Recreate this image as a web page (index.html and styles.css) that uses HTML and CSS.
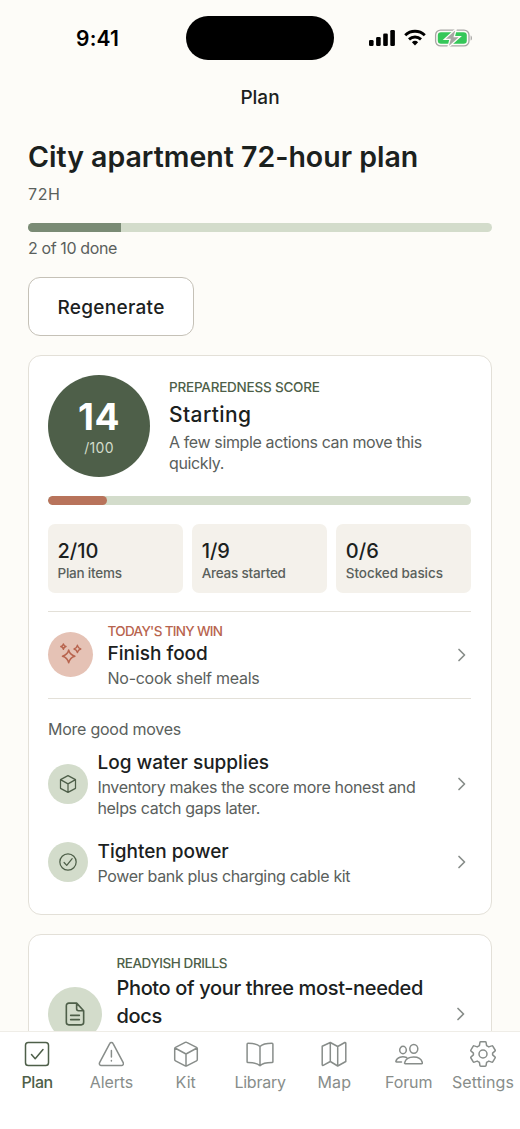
FILE: index.html
```html
<!DOCTYPE html>
<html lang="en">
<head>
<meta charset="utf-8">
<title>Plan</title>
<meta name="viewport" content="width=device-width, initial-scale=1">
<link rel="stylesheet" href="styles.css">
</head>
<body>
<div class="screen">
  <div class="status-bar">
    <div class="clock">9:41</div>
    <div class="island"></div>
    <svg class="status-icons" viewBox="0 0 104 18">
      <rect x="0" y="11" width="4.6" height="6" rx="1.3"/>
      <rect x="7.1" y="8" width="4.6" height="9" rx="1.3"/>
      <rect x="14.2" y="4.4" width="4.6" height="12.6" rx="1.3"/>
      <rect x="21.3" y="1" width="4.6" height="16" rx="1.3"/>
      <g class="wifi">
        <path d="M36.2 6.2a14.3 14.3 0 0 1 19.6 0"/>
        <path d="M40 10.4a8.7 8.7 0 0 1 12 0"/>
      </g>
      <path d="M42.9 13.2a4.7 4.7 0 0 1 6.2 0L46 16.6z"/>
      <rect class="battery-shell" x="66.6" y="1.1" width="33.4" height="15.8" rx="5"/>
      <path class="battery-cap" d="M101.6 6.4c1.8.5 1.8 4.7 0 5.2z"/>
      <rect class="battery-fill" x="68.8" y="3.2" width="29" height="11.6" rx="3.2"/>
      <path class="battery-bolt" d="M87.400-.6 75.400 10.300h5.600l-2.200 8.500 12.400-11.100h-5.900z"/>
    </svg>
  </div>
  <div class="nav-title">Plan</div>

  <main class="content">
    <h1 class="title">City apartment 72-hour plan</h1>
    <div class="duration">72H</div>
    <div class="progress plan-progress"><div class="progress-fill plan-fill" style="width:20%"></div></div>
    <div class="progress-note">2 of 10 done</div>
    <button class="regenerate">Regenerate</button>

    <section class="card">
      <div class="score">
        <div class="score-circle"><span class="score-value">14</span><span class="score-max">/100</span></div>
        <div class="score-text">
          <div class="eyebrow eyebrow-score">PREPAREDNESS SCORE</div>
          <div class="score-level">Starting</div>
          <div class="body-text body-score">A few simple actions can move this<br>quickly.</div>
        </div>
      </div>
      <div class="progress score-progress"><div class="progress-fill score-fill" style="width:14%"></div></div>
      <div class="stats">
        <div class="stat"><div class="stat-value">2/10</div><div class="stat-label">Plan items</div></div>
        <div class="stat"><div class="stat-value">1/9</div><div class="stat-label">Areas started</div></div>
        <div class="stat"><div class="stat-value">0/6</div><div class="stat-label stat-label-wide">Stocked basics</div></div>
      </div>
      <div class="win">
        <div class="badge badge-win">
          <svg class="icon" width="23" height="23" viewBox="0 0 24 24"><path d="M10.1 7.3c.9 3.7 2.6 5.4 6.5 6.5-3.9 1.1-5.6 2.8-6.5 6.9-.9-4.1-2.6-5.8-6.5-6.9 3.9-1.1 5.6-2.8 6.5-6.5zM19.2 2.4c.5 2.3 1.4 3.2 3.5 3.8-2.1.6-3 1.5-3.5 3.8-.5-2.3-1.4-3.2-3.5-3.8 2.1-.6 3-1.5 3.5-3.8zM4.6.9c.4 1.7 1 2.4 2.7 2.8-1.7.4-2.3 1.1-2.7 2.8-.4-1.7-1-2.4-2.7-2.8 1.7-.4 2.3-1.1 2.7-2.8z"/></svg>
        </div>
        <div class="row-text">
          <div class="eyebrow eyebrow-win">TODAY'S TINY WIN</div>
          <div class="row-title">Finish food</div>
          <div class="body-text">No-cook shelf meals</div>
        </div>
        <svg class="chevron" viewBox="0 0 10 14"><path d="M2 1.5 7.5 7 2 12.5"/></svg>
      </div>
      <div class="more-heading">More good moves</div>
      <div class="move">
        <div class="badge badge-move">
          <svg class="icon" width="20" height="20" viewBox="0 0 24 24"><path d="M12 2 21 6.8v10.4L12 22l-9-4.8V6.8zM3 6.8l9 5 9-5M12 11.8V22"/></svg>
        </div>
        <div class="row-text">
          <div class="row-title">Log water supplies</div>
          <div class="body-text">Inventory makes the score more honest and<br>helps catch gaps later.</div>
        </div>
        <svg class="chevron" viewBox="0 0 10 14"><path d="M2 1.5 7.5 7 2 12.5"/></svg>
      </div>
      <div class="move">
        <div class="badge badge-move">
          <svg class="icon" width="20" height="20" viewBox="0 0 24 24"><circle cx="12" cy="12" r="9.8"/><path d="m7.3 12.6 3.2 3.4L17 8"/></svg>
        </div>
        <div class="row-text">
          <div class="row-title">Tighten power</div>
          <div class="body-text">Power bank plus charging cable kit</div>
        </div>
        <svg class="chevron" viewBox="0 0 10 14"><path d="M2 1.5 7.5 7 2 12.5"/></svg>
      </div>
    </section>

    <section class="card drills">
      <div class="badge badge-drill">
        <svg class="icon" width="26" height="26" viewBox="0 0 24 24"><path d="M13.5 2H6.300A2.300 2.300 0 0 0 4 4.300v15.400A2.300 2.300 0 0 0 6.300 22h11.400a2.300 2.300 0 0 0 2.300-2.300V9zM13.500 2v5.200A1.800 1.800 0 0 0 15.300 9H20M8 13.300h8M8 17.200h8"/></svg>
      </div>
      <div class="row-text">
        <div class="eyebrow eyebrow-drill">READYISH DRILLS</div>
        <div class="drill-title">Photo of your three most-needed<br>docs</div>
      </div>
      <svg class="chevron" viewBox="0 0 10 14"><path d="M2 1.5 7.5 7 2 12.5"/></svg>
    </section>
  </main>

  <nav class="tabs">
    <div class="tab tab-active">
      <svg class="tab-icon" viewBox="0 0 26 26"><rect x="1.5" y="1.5" width="23" height="23" rx="2.8"/><path d="m7.5 13.5 3.700 4.300L19 8.500"/></svg>
      <span>Plan</span>
    </div>
    <div class="tab">
      <svg class="tab-icon" viewBox="0 0 26 26"><path d="M11.700 2.600 1.600 21.700a1.900 1.900 0 0 0 1.700 2.800h20.200a1.900 1.900 0 0 0 1.700-2.800L15.100 2.600a1.900 1.900 0 0 0-3.400 0zM13.400 9.500v6.600M13.400 19.500v.5"/></svg>
      <span>Alerts</span>
    </div>
    <div class="tab">
      <svg class="tab-icon" viewBox="0 0 26 26"><path d="M12.200 1.400 2.500 6.300a1.500 1.500 0 0 0-.8 1.300v11a1.500 1.500 0 0 0 .8 1.300l9.700 5a1.600 1.600 0 0 0 1.500 0l9.800-5a1.500 1.500 0 0 0 .8-1.300v-11a1.500 1.500 0 0 0-.8-1.300l-9.800-4.900a1.600 1.600 0 0 0-1.500 0zM2 7l11 6 11-6M13 13v12"/></svg>
      <span class="tab-label-wide">Kit</span>
    </div>
    <div class="tab">
      <svg class="tab-icon tab-icon-book" viewBox="0 0 28 26"><path d="M14 5.500C11.500 3 7 2.300 2 2.300c-.5 0-.9.4-.9.9v17.500c0 .5.4.9.9.9 5 0 9.500.5 12 3.200 2.500-2.700 7-3.200 12-3.200.5 0 .9-.4.9-.9V3.200c0-.5-.4-.9-.9-.9-5 0-9.500.7-12 3.200zM14 5.500v19.300"/></svg>
      <span class="tab-label-tight">Library</span>
    </div>
    <div class="tab">
      <svg class="tab-icon" viewBox="0 0 26 26"><path d="M9.300 1.500 1.200 5.300v18.500a.7.7 0 0 0 1 .6L9.300 20.500l7.400 4.500 8.100-4.500V2.100a.7.7 0 0 0-1-.6l-7.100 4zM9.300 1.500v19M16.700 5.500V25"/></svg>
      <span class="tab-label-wide">Map</span>
    </div>
    <div class="tab">
      <svg class="tab-icon tab-icon-people" viewBox="0 0 28 26"><ellipse cx="18.800" cy="7.800" rx="4" ry="4.400"/><ellipse cx="8" cy="9" rx="3.300" ry="3.700"/><path d="M10.300 22.700h16.400c.6 0 .9-.4.7-1-1-3.700-4.600-5.600-8.700-5.600s-8 1.900-9.100 5.600c-.2.6.1 1 .7 1zM11.500 16.500C7 15 2 16.300.9 20.300c-.1.500.2.8.6.8H6.500"/></svg>
      <span>Forum</span>
    </div>
    <div class="tab">
      <svg class="tab-icon" viewBox="0 0 26 26"><circle cx="13" cy="13" r="4"/><path d="M10.800.8h4.400q.8 0 .9.8l.5 3 2.200 1.300 2.900-1q.8-.3 1.200.4l2.200 3.700q.4.7-.2 1.200l-2.300 1.900v1.800l2.300 1.900q.6.500.2 1.200l-2.200 3.700q-.4.7-1.200.4l-2.900-1-2.200 1.300-.5 3q-.1.8-.9.8h-4.400q-.8 0-.9-.8l-.5-3-2.200-1.300-2.900 1q-.8.300-1.200-.4L.9 17q-.4-.7.2-1.200l2.300-1.900v-1.800l-2.300-1.900Q.5 9.700.9 9l2.200-3.700q.4-.7 1.200-.4l2.900 1 2.200-1.300.5-3q.1-.8.9-.8z"/></svg>
      <span class="tab-label-wide">Settings</span>
    </div>
  </nav>
</div>
</body>
</html>
```
FILE: styles.css
```css
* { box-sizing: border-box; }
body {
  margin: 0;
  background: #fdfcf8;
  color: #1b211e;
  font-family: Inter, "Noto Sans", sans-serif;
}
.screen { display: flex; flex-direction: column; height: 1129px; overflow: hidden; }

/* Status bar */
.status-bar { display: grid; grid-template-columns: 186px 148px 186px; align-items: start; flex: none; height: 76px; padding-top: 16px; }
.clock { padding: 10px 0 0 76px; font-size: 21px; line-height: 26px; font-weight: 600; letter-spacing: 0.2px; color: #000; }
.island { height: 44px; border-radius: 22px; background: #000; }
.status-icons { width: 104px; height: 18px; margin: 13px 0 0 35px; overflow: visible; }
.wifi { fill: none; stroke: #000; stroke-width: 2.9; }
.battery-shell { fill: none; stroke: #a7a6a4; stroke-width: 1.3; }
.battery-cap { fill: #a7a6a4; }
.battery-fill { fill: #35c759; }
.battery-bolt { fill: #a7a6a4; stroke: #fdfcf8; stroke-width: 1.3; }

.nav-title { flex: none; height: 44px; text-align: center; font-size: 19px; line-height: 43px; font-weight: 500; }

/* Plan header */
.content { flex: 1; min-height: 0; overflow: hidden; padding: 19px 28.5px 0 28px; }
.title { margin: 0; font-size: 28.5px; line-height: 36px; font-weight: 620; white-space: nowrap; }
.duration { margin-top: 7.5px; font-size: 16px; line-height: 22px; letter-spacing: 0.6px; color: #5a605c; }
.progress { height: 9.5px; border-radius: 5px; background: #d3dccb; overflow: hidden; }
.progress-fill { height: 100%; }
.plan-progress { margin-top: 18px; }
.plan-fill { background: #7a8b75; }
.progress-note { margin-top: 5px; font-size: 16px; line-height: 22px; letter-spacing: -0.38px; color: #5a605c; }
.regenerate { display: block; width: 166px; height: 59px; margin-top: 18px; padding: 2px 0 0; border: 1px solid #c5c1b7; border-radius: 12px; background: #fff; color: #1b211e; font: 500 19px/24px Inter, sans-serif; letter-spacing: 0.3px; }

/* Score card */
.card { margin-top: 19px; padding: 19px 19.5px 27px 19px; border: 1px solid #e3e0d8; border-radius: 13px; background: #fff; }
.score { display: flex; align-items: center; gap: 19px; }
.score-circle { display: flex; flex-direction: column; align-items: center; flex: none; width: 102px; height: 102px; padding-top: 20px; border-radius: 50%; background: #4e5f49; }
.score-value { font-size: 37px; line-height: 44px; font-weight: 700; letter-spacing: 0.6px; color: #fff; }
.score-max { font-size: 14px; line-height: 18px; letter-spacing: 0.3px; color: #d3dccb; }
.eyebrow { font-size: 13.5px; line-height: 18px; font-weight: 500; color: #4e5f49; white-space: nowrap; }
.eyebrow-score { letter-spacing: -0.22px; }
.eyebrow-win { letter-spacing: -0.67px; color: #b8644e; }
.eyebrow-drill { letter-spacing: -0.45px; }
.score-level { margin-top: 5px; font-size: 21px; line-height: 27px; font-weight: 550; letter-spacing: 0.4px; }
.body-text { font-size: 16px; line-height: 21.5px; letter-spacing: -0.34px; color: #5a605c; white-space: nowrap; }
.body-score { margin-top: 4px; letter-spacing: -0.38px; }
.score-progress { margin-top: 18.5px; }
.score-fill { border-radius: 5px; background: #b8735b; }
.stats { display: grid; grid-template-columns: repeat(3, 1fr); gap: 9.5px; margin-top: 18.5px; }
.stat { height: 69px; padding: 14px 9.5px 0; border-radius: 7px; background: #f4f1eb; }
.stat-value { font-size: 20px; line-height: 26px; font-weight: 550; }
.stat-label { font-size: 13.5px; line-height: 18px; font-weight: 500; letter-spacing: -0.22px; color: #5a605c; }
.stat-label-wide { letter-spacing: -0.08px; }

/* List rows */
.win { display: flex; align-items: center; height: 88px; margin-top: 18px; border: solid #e3e0d8; border-width: 1px 0; }
.badge { display: flex; align-items: center; justify-content: center; flex: none; border-radius: 50%; background: #d3dccb; color: #4e5f49; }
.icon { fill: none; stroke: currentColor; stroke-width: 1.5; stroke-linejoin: round; stroke-linecap: round; }
.badge-win { width: 45px; height: 45px; background: #e5c2b5; color: #b8644e; }
.row-text { flex: 1; min-width: 0; }
.row-title { font-size: 19px; line-height: 27px; font-weight: 550; white-space: nowrap; }
.win .row-text { padding: 2px 0 0 14.5px; }
.win .row-title { line-height: 28px; }
.win .body-text { letter-spacing: -0.26px; }
.chevron { flex: none; width: 10px; height: 14px; margin-right: 4px; fill: none; stroke: #888d8a; stroke-width: 1.7; stroke-linecap: round; stroke-linejoin: round; }
.more-heading { margin-top: 19px; font-size: 16px; line-height: 22px; letter-spacing: -0.25px; color: #5a605c; }
.move { display: flex; align-items: center; margin-top: 9px; }
.move + .move { margin-top: 18px; }
.move .row-text { padding-left: 9.5px; }
.move .body-text { margin-top: 1px; }
.badge-move { width: 40px; height: 40px; }

/* Drills card */
.drills { display: flex; align-items: center; height: 160px; padding-top: 19px; padding-bottom: 19px; }
.drills .row-text { height: 120px; padding-left: 14.5px; }
.badge-drill { width: 54px; height: 54px; }
.drill-title { margin-top: 2px; font-size: 20px; line-height: 28px; font-weight: 550; letter-spacing: -0.36px; white-space: nowrap; }
.drills .chevron { margin-right: 5px; }

/* Tab bar */
.tabs { display: grid; grid-template-columns: repeat(7, 74.3px); flex: none; height: 98px; border-top: 1px solid #efede7; background: #fff; }
.tab { display: flex; flex-direction: column; align-items: center; padding-top: 9px; font-size: 16px; line-height: 22px; letter-spacing: -0.1px; color: #888d8a; }
.tab-active { font-weight: 500; letter-spacing: -0.4px; color: #4e5f49; }
.tab-icon { width: 26px; height: 26px; margin-bottom: 4px; fill: none; stroke: currentColor; stroke-width: 1.5; stroke-linejoin: round; stroke-linecap: round; }
.tab-icon-book, .tab-icon-people { width: 28px; }
.tab-label-tight { letter-spacing: -0.25px; }
.tab-label-wide { letter-spacing: 0.1px; }
```
